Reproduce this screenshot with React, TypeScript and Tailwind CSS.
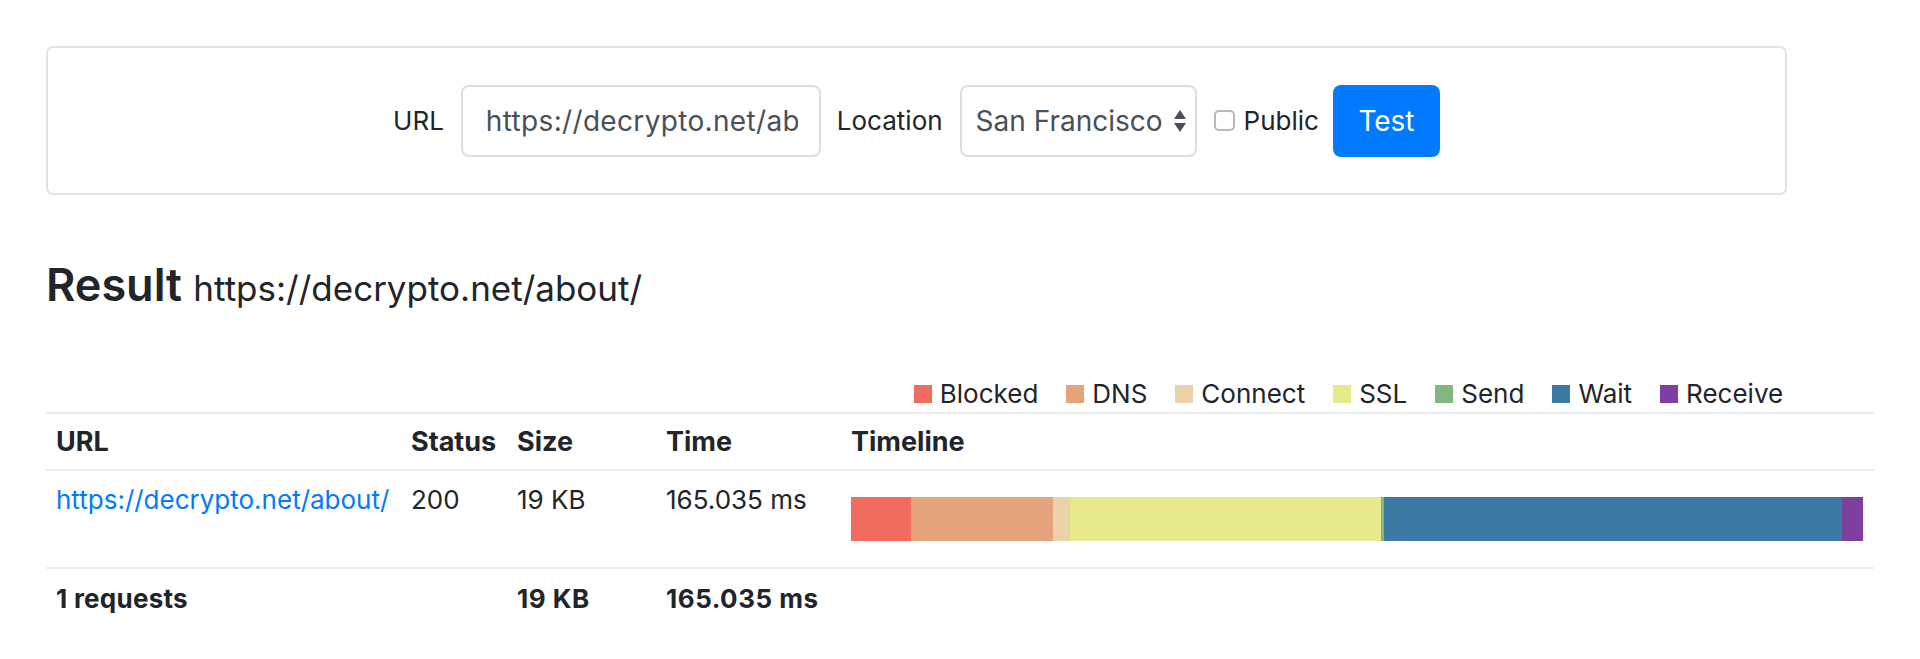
import React from "react";

type Phase = { name: string; ms: number; color: string; swatch: string };

const phases: Phase[] = [
  { name: "Blocked", ms: 9.79, color: "#f06c5f", swatch: "bg-[#f06c5f]" },
  { name: "DNS", ms: 23.18, color: "#e5a37b", swatch: "bg-[#e5a37b]" },
  { name: "Connect", ms: 2.78, color: "#ebd2aa", swatch: "bg-[#ebd2aa]" },
  { name: "SSL", ms: 50.77, color: "#e8e98a", swatch: "bg-[#e8e98a]" },
  { name: "Send", ms: 0.33, color: "#80b880", swatch: "bg-[#80b880]" },
  { name: "Wait", ms: 74.76, color: "#3e79a3", swatch: "bg-[#3e79a3]" },
  { name: "Receive", ms: 3.43, color: "#7f3fa1", swatch: "bg-[#7f3fa1]" },
];

const total = phases.reduce((s, p) => s + p.ms, 0);

const cols = "grid grid-cols-[355px_106px_149px_185px_1fr]";

function SelectArrows() {
  return (
    <svg width="14" height="24" viewBox="0 0 14 24" className="shrink-0">
      <path d="M7 1 L13 10 L1 10 Z" fill="#4a4f55" />
      <path d="M1 14 L13 14 L7 23 Z" fill="#4a4f55" />
    </svg>
  );
}

export default function App() {
  return (
    <div className="min-h-screen bg-white text-[#212529] font-[Inter,'Noto_Sans',sans-serif] px-[46px] pt-[46px]">
      {/* search form */}
      <div className="w-[1741px] h-[149px] border-2 border-[#e1e3e6] rounded-[7px] flex items-center justify-center">
        <div className="flex items-center text-[26px] leading-[36px]">
          <label className="mr-[17px]">URL</label>
          {/* url field: text is clipped at the content box */}
          <div className="w-[360px] h-[72px] border-2 border-[#dcdfe2] rounded-[8px] pl-[23px] pr-[21px] flex items-center text-[28px] tracking-[0.012em] text-[#495057]">
            <div className="w-full overflow-hidden whitespace-nowrap">https://decrypto.net/about/</div>
          </div>
          <label className="ml-[16px] mr-[17px]">Location</label>
          <div className="w-[237px] h-[72px] border-2 border-[#dcdfe2] rounded-[8px] pl-[14px] pr-[8px] flex items-center justify-between text-[28px] text-[#495057] whitespace-nowrap">
            <span>San Francisco</span>
            <SelectArrows />
          </div>
          <span className="ml-[17px] w-[21px] h-[21px] rounded-[5px] border-2 border-[#b5b8bc] bg-white" />
          <span className="ml-[9px]">Public</span>
          <button className="ml-[14px] w-[107px] h-[72px] bg-[#007bff] text-white rounded-[8px] text-[28px]">
            Test
          </button>
        </div>
      </div>

      {/* result heading */}
      <h3 className="mt-[65px] leading-[50px] text-[45px] font-semibold">
        Result{" "}
        <span className="text-[35px] font-normal">https://decrypto.net/about/</span>
      </h3>

      {/* result table */}
      <div className="mt-[63px] text-[26px] leading-[36px]">
        <div className={`${cols} h-[36px]`}>
          <div />
          <div />
          <div />
          <div />
          <div className="flex items-center justify-center gap-[28px] pr-[18px]">
            {phases.map((p) => (
              <div key={p.name} className="flex items-center gap-[8px]">
                <span className={`w-[18px] h-[18px] ${p.swatch}`} />
                <span>{p.name}</span>
              </div>
            ))}
          </div>
        </div>

        <div className={`${cols} border-t-2 border-[#e9ecef] font-bold text-[27px]`}>
          <div className="px-[10px] pt-[10px] pb-[9px]">URL</div>
          <div className="px-[10px] pt-[10px] pb-[9px]">Status</div>
          <div className="px-[10px] pt-[10px] pb-[9px]">Size</div>
          <div className="px-[10px] pt-[10px] pb-[9px]">Time</div>
          <div className="px-[10px] pt-[10px] pb-[9px]">Timeline</div>
        </div>

        <div className={`${cols} border-t-2 border-[#e9ecef]`}>
          <div className="px-[10px] pt-[11px]">
            <a href="#" className="text-[#007bff]">https://decrypto.net/about/</a>
          </div>
          <div className="px-[10px] pt-[11px]">200</div>
          <div className="px-[10px] pt-[11px]">19 KB</div>
          <div className="px-[10px] pt-[11px]">165.035 ms</div>
          <div className="pl-[10px] pr-[11px] py-[10px]">
            <div className="my-[16px] h-[44px] flex">
              {phases.map((p) => (
                <div
                  key={p.name}
                  className="h-full"
                  style={{ width: `${(p.ms / total) * 100}%`, backgroundColor: p.color }}
                />
              ))}
            </div>
          </div>
        </div>

        <div className={`${cols} border-t-2 border-[#e9ecef] font-bold text-[26px]`}>
          <div className="px-[10px] pt-[12px] tracking-[0.01em]">1 requests</div>
          <div className="px-[10px] pt-[12px]" />
          <div className="px-[10px] pt-[12px] tracking-[0.02em]">19 KB</div>
          <div className="px-[10px] pt-[12px] tracking-[0.02em]">165.035 ms</div>
          <div />
        </div>
      </div>
    </div>
  );
}
